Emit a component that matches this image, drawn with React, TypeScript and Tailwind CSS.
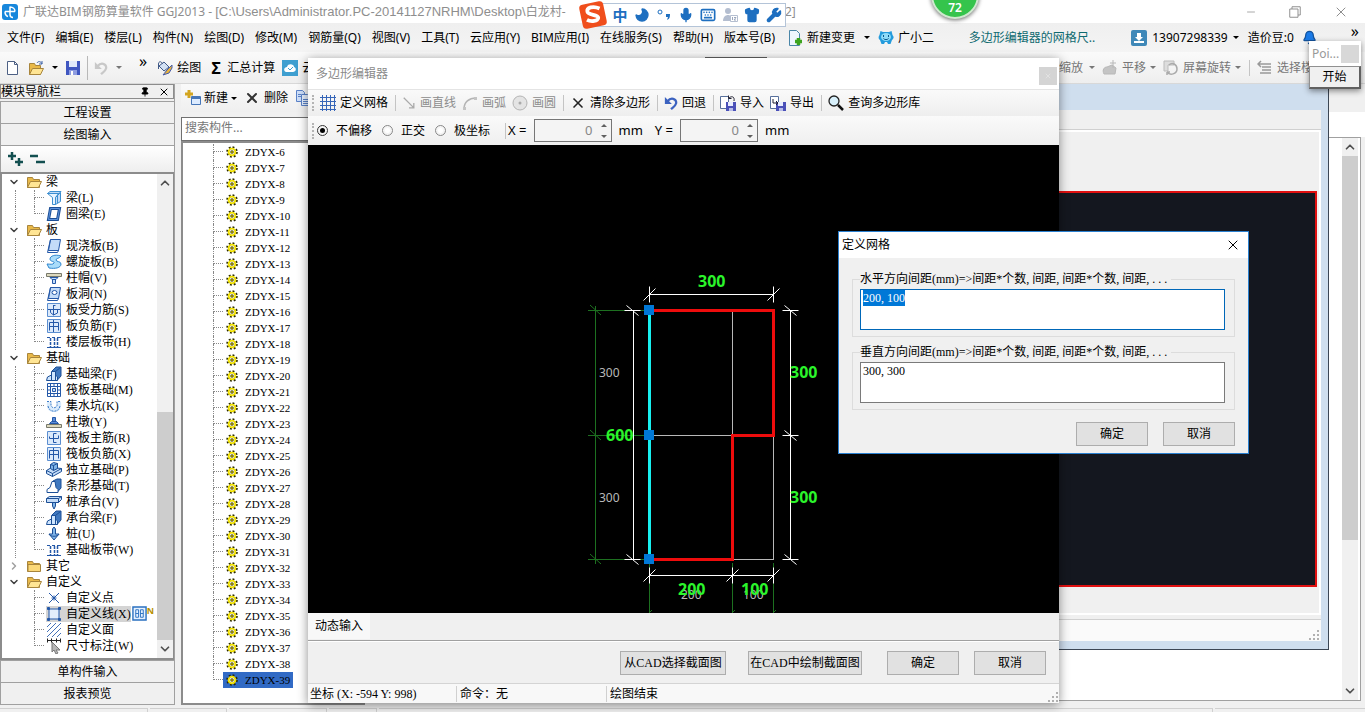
import { useEffect, useRef, useState } from 'react';
import type { ReactNode } from 'react';
import clsx from 'clsx';
import { Bell, ChevronDown, ChevronRight, ChevronUp, Keyboard, Mic, Minus, Moon, Pin, Shirt, Wrench, X } from 'lucide-react';

const ui = "font-['Noto_Sans','Noto_Sans_CJK_SC',sans-serif]";
const song = "font-['Liberation_Serif','Noto_Sans_CJK_SC',serif]";

const menus = [
  '文件(F)', '编辑(E)', '楼层(L)', '构件(N)', '绘图(D)', '修改(M)', '钢筋量(Q)', '视图(V)',
  '工具(T)', '云应用(Y)', 'BIM应用(I)', '在线服务(S)', '帮助(H)', '版本号(B)',
];

const tree = [
  { name: '梁', open: true, items: [['beam', '梁(L)'], ['ring', '圈梁(E)']] },
  {
    name: '板',
    open: true,
    items: [
      ['slab', '现浇板(B)'], ['spiral', '螺旋板(B)'], ['cap', '柱帽(V)'], ['hole', '板洞(N)'],
      ['rebar', '板受力筋(S)'], ['negative', '板负筋(F)'], ['strip', '楼层板带(H)'],
    ],
  },
  {
    name: '基础',
    open: true,
    items: [
      ['found', '基础梁(F)'], ['raft', '筏板基础(M)'], ['pit', '集水坑(K)'], ['pier', '柱墩(Y)'],
      ['mainbar', '筏板主筋(R)'], ['negative', '筏板负筋(X)'], ['single', '独立基础(P)'], ['band', '条形基础(T)'],
      ['pilecap', '桩承台(V)'], ['found', '承台梁(F)'], ['pile', '桩(U)'], ['strip', '基础板带(W)'],
    ],
  },
  { name: '其它', open: false, items: [] },
  {
    name: '自定义',
    open: true,
    items: [['point', '自定义点'], ['line', '自定义线(X)'], ['area', '自定义面'], ['measure', '尺寸标注(W)']],
  },
];

const components = Array.from({ length: 34 }, (_, i) => `ZDYX-${i + 6}`);

function Svg({ children, className = 'size-4' }: { children: ReactNode; className?: string }) {
  return (
    <svg viewBox="0 0 16 16" className={clsx('shrink-0', className)} fill="none" aria-hidden="true">
      {children}
    </svg>
  );
}

const B = '#2458a8';
const L = '#c4dcf8';

const treeIcons: Record<string, ReactNode> = {
  beam: (
    <g stroke="#3d8fd0" fill={L}>
      <path d="M1.500 3.500 4 1.500h11l-2 2z" />
      <path d="M1.500 3.500h11l-3 4v7h-3v-7z" fill="#e8f4ff" />
      <path d="m9.500 7.500 5-5v9l-5 3zM11.500 6v7" />
    </g>
  ),
  ring: (
    <>
      <path d="M4.500 2.500h9l-2 11h-9z" stroke="#1c4f96" strokeWidth="3" fill="#fff" />
      <path d="M4.500 2.500h9l-2 11h-9z" stroke="#5d92dc" />
    </>
  ),
  slab: (
    <g stroke={B}>
      <path d="M4.500 1.500h10l-2 11h-10z" fill={L} />
      <path d="M4.500 1.500 1.500 14.500h10l1-2M2.500 12.500h10" />
    </g>
  ),
  spiral: <path d="M15 2C9 0 4 2 4 5c0 3 5 2 4 4-1 2-4 1-7 1l2 4c6 1 12 0 12-4 0-3-5-2-5-4 0-2 3-1 5-4z" fill="#a9dcfa" stroke="#2f86cf" />,
  cap: (
    <>
      <path d="M.5 3.500h15v3H.5z" fill="#dcd8bd" stroke="#77786b" />
      <path d="m4 7.500 2 2h4l2-2zM6.500 9.500h3v4h-3z" fill={L} stroke={B} />
    </>
  ),
  hole: (
    <g stroke={B}>
      <path d="M4.500 1.500h10l-2 11h-10z" fill={L} />
      <path d="M4.500 1.500 1.500 14.500h10l1-2M2.500 12.500h10" />
      <ellipse cx="8.500" cy="6.500" rx="2.500" ry="2" fill="#fff" />
    </g>
  ),
  rebar: (
    <g stroke={B}>
      <path d="M1.500 1.500h13v13h-13z" fill="#dceafb" stroke="#5b8ed0" />
      <path d="M2 7.500h12M7.500 3v10M9.500 3.500h-2M4.500 8v2.500l3 2.500 4-2V8" />
    </g>
  ),
  mainbar: (
    <g stroke={B}>
      <path d="M1.500 1.500h13v13h-13z" fill="#dceafb" stroke="#5b8ed0" />
      <path d="M3.500 6.500v2h9v-3M10.500 3.500h-3v9h3" />
    </g>
  ),
  negative: (
    <g stroke={B}>
      <path d="M1.500 1.500h13v13h-13z" fill="#dceafb" stroke="#5b8ed0" />
      <path d="M3.500 12.500v-8h9v8M3.500 8.500h9M7.500 2v12" />
    </g>
  ),
  strip: (
    <g stroke={B}>
      <path d="M1 13.500h14M1 3.500h3M6 3.500h3M11 3.500h4" />
      <path d="M4.500 4v9M8.500 4v9M11.500 4v9" strokeWidth="1.500" strokeDasharray="3 1" />
    </g>
  ),
  found: (
    <g stroke="#1c4f96">
      <path d="m6 5 4-4h5v9l-4 4.500z" fill="#3f78bf" />
      <path d="M.500 14.500 1.500 11l4-2V5.500h4V9l2 2v3.500z" fill="#cfe6ff" />
      <path d="M5.500 9v5M9.500 9v5M9.500 5.500l5-4" />
    </g>
  ),
  raft: (
    <g stroke={B}>
      <path d="M1.500 1.500h13v13h-13z" fill="#fff" />
      <path d="M1 4.500h14M1 11.500h14M4.500 1v14M11.500 1v14" />
      <path d="M6.500 6.500h3v3h-3z" fill={L} />
      <path d="M1 8h3M12 8h3M8 1v3M8 12v3" />
    </g>
  ),
  pit: (
    <>
      <path d="M1 4h4v4c1 2 5 2 6 0V4h4c1 7-2 10-7 10S0 11 1 4z" fill="#d9ebfc" />
      <path d="M1 3.500h4v4c1 3 5 3 6 0v-4h4M2 8c1 7 11 7 12 0" stroke="#3d7cc8" strokeDasharray="2 1" />
    </>
  ),
  pier: (
    <>
      <path d="M.5 10.500h15v3H.5z" fill="#dcd8bd" stroke="#77786b" />
      <path d="m3.500 9.500 2-2h5l2 2zM6.500 3.500h3v4h-3z" fill="#5c8cd8" stroke={B} />
    </>
  ),
  single: (
    <g stroke="#1c4f96">
      <path d="m.500 8.500 5-3 10 1v3l-9 5-6-3z" fill={L} />
      <path d="m.500 8.500 6 3 9-5M6.500 11.500v3" />
      <path d="m4.500 2.500 3-2 4 1v5l-4 2-3-2z" fill="#7fb4e8" />
      <path d="m4.500 2.500 3 1 4-2M7.500 3.500v5" />
    </g>
  ),
  band: (
    <g stroke="#1c4f96">
      <path d="m7 3 4-2h4v9l-4 4.500z" fill="#3f78bf" />
      <path d="M1 14.500v-3l3-2 2-6h3l1 6 2 2v3z" fill="#fff" />
    </g>
  ),
  pilecap: (
    <g stroke="#1c4f96">
      <path d="m.500 4.500 3-2h12v3l-3 3H.500z" fill={L} />
      <path d="M.500 4.500h12l3-2M12.500 4.500v4" />
      <path d="M6.500 8.500h3V12L8 15l-1.500-3z" fill="#7fb4e8" />
    </g>
  ),
  pile: <path d="M8 1 6.500 3v5H3l5 6 5-6H9.500V3zM3 8c1 3 9 3 10 0" fill="#7fb4e8" stroke="#1c4f96" />,
  point: <path d="m3 3 10 10M13 3 3 13M5.500 8h5M8 5.500v5" stroke={B} />,
  line: (
    <g stroke={B}>
      <path d="M3 3h10v10H3z" fill="#e4eefb" />
      <path d="M1.500 1.500h2v2h-2zM12.500 1.500h2v2h-2zM1.500 12.500h2v2h-2zM12.500 12.500h2v2h-2z" fill={B} />
    </g>
  ),
  area: <path d="m1 5 4-4M1 10l9-9M1 15 15 1M6 15l9-9M11 15l4-4" stroke="#4472b8" />,
  measure: (
    <>
      <path d="M1.500.500v4M14.500.500v4M1 2.500h14M5.500.500v4M10.500.500v4" stroke="#222" />
      <path d="m6 4 8 8h-4l2 3-2 1-2-4-2 2z" fill="#b8b8b8" stroke="#777" />
    </>
  ),
};

function Folder({ open }: { open?: boolean }) {
  return (
    <Svg>
      <path d="M1.500 13.500v-10h5l1 2h6v8z" fill="#e9b949" stroke="#a8853c" />
      {open ? (
        <path d="m1.500 13.500 3-6h11l-3 6z" fill="#ffe594" stroke="#a8853c" />
      ) : (
        <path d="M2 6.500h12.500v7H2z" fill="#fbd878" stroke="#a8853c" />
      )}
    </Svg>
  );
}

function Gear() {
  return (
    <Svg className="size-3">
      <circle cx="8" cy="8" r="6.500" stroke="#2b2a00" strokeWidth="2.500" strokeDasharray="2.500 2.600" />
      <circle cx="8" cy="8" r="4.500" fill="#fff" stroke="#f0e000" strokeWidth="2.500" />
      <path d="M6.500 6.500h3v3h-3z" fill="#f0e000" stroke="#2b2a00" />
    </Svg>
  );
}

function Arrow({ className = 'border-t-black' }: { className?: string }) {
  return <span className={clsx('border-x-3 border-t-3 border-x-transparent', className)} />;
}

function Sep() {
  return <span className="ml-px h-4 w-px bg-[#c4c4c4]" />;
}

function Grip() {
  return <span className="h-4 border-l-2 border-dotted border-[#b4b4b4]" />;
}

function Dots() {
  return (
    <svg viewBox="0 0 10 10" className="size-[10px] fill-[#b0b0b0]" aria-hidden="true">
      <path d="M8 0h2v2H8zM8 4h2v2H8zM4 4h2v2H4zM8 8h2v2H8zM4 8h2v2H4zM0 8h2v2H0z" />
    </svg>
  );
}

function Tool({ icon, label, disabled }: { icon: ReactNode; label: string; disabled?: boolean }) {
  return (
    <button disabled={disabled} className="flex items-center gap-1 whitespace-nowrap disabled:text-[#8c8c8c]">
      {icon}
      {label}
    </button>
  );
}

function PushButton({ children, className = 'w-[72px]' }: { children: ReactNode; className?: string }) {
  return (
    <button className={clsx('h-6 border border-[#adadad] bg-[#e1e1e1] hover:border-[#0078d7]', className)}>{children}</button>
  );
}

function TitleBar() {
  return (
    <header className="flex h-[23px] items-center bg-white pl-[2px] text-xs text-[#8e8e8e]">
      <Svg className="mr-[5px] size-4">
        <rect width="16" height="16" rx="3" fill="#1787dc" />
        <path d="M8 2.500v8c0 2 1.500 3 3 3M3 7.500h10M8 3c3 0 5 2 5 4.500M3 7.500C3 10 4.500 12 6 12.500" stroke="#fff" strokeWidth="1.500" />
      </Svg>
      <h1 className="w-[762px] overflow-hidden whitespace-nowrap">
        广联达BIM钢筋算量软件 GGJ2013 -{' '}
        <span className="font-['Liberation_Sans',sans-serif] text-[13px]">[C:\Users\Administrator.PC-20141127NRHM\Desktop\</span>
        白龙村-
      </h1>
      <span>2]</span>
      <div className="ml-auto flex items-center gap-8 pr-4">
        <button aria-label="最小化"><Minus className="size-3" strokeWidth={1.5} /></button>
        <button aria-label="还原">
          <Svg className="size-3"><path d="M1 4h11v11H1zM4 4V1h11v11h-3" stroke="#8e8e8e" strokeWidth="1.300" /></Svg>
        </button>
        <button aria-label="关闭"><X className="size-4" strokeWidth={1.5} /></button>
      </div>
    </header>
  );
}

function MenuBar() {
  return (
    <nav className="flex h-[29px] items-center bg-gradient-to-b from-[#efefef] to-[#f4f4f4] pl-[7px] text-xs whitespace-nowrap">
      <div className="flex gap-[11px]">
        {menus.map((m) => (
          <button key={m}>{m}</button>
        ))}
      </div>
      <button className="ml-3 flex items-center gap-1">
        <Svg>
          <path d="M2.500.5h7l3 3v12h-10z" fill="#eef7ff" stroke="#4a86a8" />
          <path d="M11.500 8v7M8 11.500h7" stroke="#3da420" strokeWidth="3.500" />
        </Svg>
        新建变更
        <span className="w-px" />
        <Arrow />
      </button>
      <button className="ml-2 flex items-center gap-1">
        <Svg>
          <path d="M2.500 1 5 2h6l2.500-1 1 4c2 2 1 4-.500 5l-1.500 4H10l-1-2H7l-1 2H3.500L2 10C.500 9 0 7 1.500 5z" fill="#249bdc" />
          <ellipse cx="8" cy="7" rx="5" ry="4" fill="#8fdbf8" />
          <path d="M5.500 5v2M10.500 5v2M5.500 8.500c1 1.500 4 1.500 5 0" stroke="#07578a" />
        </Svg>
        广小二
      </button>
      <div className="ml-auto flex h-full items-center pr-[6px]">
        <a href="#grid-size" className="mr-9 text-[#0e6a70]">多边形编辑器的网格尺..</a>
        <button className="flex items-center gap-[5px]">
          <Svg>
            <rect width="16" height="16" rx="2" fill="#3f88b8" />
            <path d="M6 3h4v4h2l-4 4-4-4h2zM3 11h10v2H3z" fill="#fff" />
          </Svg>
          13907298339
          <Arrow />
        </button>
        <span className="ml-[9px]">造价豆:0</span>
        <Bell className="ml-2 size-[15px] fill-[#1b7be8] text-[#14539c]" />
        <button className="ml-[34px] self-start text-base leading-4" aria-label="更多">»</button>
      </div>
    </nav>
  );
}

function Undo({ color }: { color: string }) {
  return (
    <Svg className="size-[14px]">
      <path d="M4 6c4-5 10-3 10 2-1 4-4 5-6 7" stroke={color} strokeWidth="2.500" />
      <path d="M1 1v8h8z" fill={color} />
    </Svg>
  );
}

function MainToolbar() {
  return (
    <div className="flex h-8 items-center border-b border-[#d8d8d8] bg-gradient-to-b from-[#fafafa] to-[#eeeeee] pl-[5px] text-xs whitespace-nowrap">
      <button aria-label="新建工程">
        <Svg><path d="M2.500 1.500h7l3 3v10h-10z" fill="#fff" stroke="#4d6084" /><path d="M9.500 1.500v3h3" stroke="#4d6084" /></Svg>
      </button>
      <button aria-label="打开" className="ml-[7px] flex items-center gap-2">
        <Svg>
          <path d="M1.500 14.500v-11h5l1 2h5v9z" fill="#e9b949" stroke="#a8853c" />
          <path d="m1.500 14.500 3-6h11l-3 6z" fill="#ffe594" stroke="#a8853c" />
          <path d="M9 3c1-2 4-2 5 1M14 1v3h-3" stroke="#3f64a8" />
        </Svg>
        <Arrow />
      </button>
      <button aria-label="保存" className="ml-[7px]">
        <Svg>
          <path d="M1 1h14v14H1z" fill="#3f56c0" />
          <path d="M4 1h8v6H4z" fill="#dfe8fa" />
          <path d="M4 10h8v5H4z" fill="#8f9de0" />
          <path d="M6 11h2v4H6z" fill="#fff" />
        </Svg>
      </button>
      <span className="mx-[6px] h-6 w-px bg-[#b8b8b8]" />
      <button aria-label="撤销" disabled className="flex items-center gap-2"><Undo color="#c8c8c8" /><Arrow className="border-t-[#777]" /></button>
      <button aria-label="更多" className="mr-[10px] ml-[17px] self-start pt-px text-base leading-4">»</button>
      <Tool
        label="绘图"
        icon={
          <Svg>
            <path d="m2 6 5-4 5 5-5 4z" fill="#d4e2f5" stroke="#405a88" />
            <path d="M1.500 9V4c0-3 3-3 4 0" stroke="#405a88" />
            <path d="m15 5-5 5-4 5 6-2 3-5z" fill="#e8b33c" stroke="#475ca8" />
          </Svg>
        }
      />
      <span className="w-2" />
      <Tool label="汇总计算" icon={<span className="w-[14px] text-base font-bold leading-4">Σ</span>} />
      <span className="w-[7px]" />
      <Tool
        label="云"
        icon={
          <Svg>
            <rect width="16" height="16" fill="#3f9fd0" />
            <path d="M4 12c-3-1-2-5 1-5 1-4 7-3 7 0 3 1 2 5-1 5z" fill="#fff" />
            <path d="m6 8 2 2 3-3" stroke="#3f9fd0" />
          </Svg>
        }
      />
      <select aria-label="楼层" className="ml-[391px] h-[22px] w-[62px] appearance-none border border-[#606060] bg-white" />
      <div className="ml-auto flex items-center gap-[7px] pr-[40px] text-[#777]">
        <button disabled className="flex items-center gap-[6px]">缩放<Arrow className="border-t-[#777]" /></button>
        <button disabled className="flex items-center gap-1">
          <Svg><path d="M2 14c-2-4 0-7 3-7l5-2 4 3-1 6zM11 0v8M8 3h6" fill="#c4c4c4" stroke="#b8b8b8" /></Svg>
          平移
          <Arrow className="border-t-[#777]" />
        </button>
        <button disabled className="flex items-center gap-1">
          <Svg><path d="M1 1h10v4H5v6H1z" fill="#ddd" stroke="#bbb" /><path d="M4 12c3 4 10 2 10-3S9 2 6 5M4 12v3M4 12h3" stroke="#aaa" strokeWidth="1.500" /></Svg>
          屏幕旋转
          <Arrow className="border-t-[#777]" />
        </button>
        <Sep />
        <button disabled className="flex items-center gap-1">
          <Svg><path d="M1 4h13M4 1 1 4l3 3M5 7h9M5 10h9M3 13h11" stroke="#999" strokeWidth="1.500" /></Svg>
          选择楼层
        </button>
      </div>
    </div>
  );
}

function Scrollbar({ thumb }: { thumb: string }) {
  return (
    <div className="flex w-4 shrink-0 flex-col bg-[#f0f0f0] text-[#505050]">
      <ChevronUp className="my-[2px] size-[14px] self-center" strokeWidth={3} />
      <div className="relative flex-1">
        <div className={clsx('absolute inset-x-0 bg-[#cdcdcd]', thumb)} />
      </div>
      <ChevronDown className="my-[2px] size-[14px] self-center" strokeWidth={3} />
    </div>
  );
}

function Branch({ last }: { last: boolean }) {
  return (
    <span className="flex h-4 w-3 flex-col">
      <span className="h-2 w-[10px] border-b border-l border-dotted border-[#888]" />
      <span className={clsx('h-2 border-dotted border-[#888]', !last && 'border-l')} />
    </span>
  );
}

function NavButton({ children }: { children: string }) {
  return <button className="h-[22px] shrink-0 border-t border-[#a0a0a0] bg-[#f0f0f0]">{children}</button>;
}

function Sidebar() {
  const [selected, setSelected] = useState('自定义线(X)');
  return (
    <aside className="flex w-[175px] shrink-0 flex-col border-r border-[#a0a0a0] text-xs">
      <div className="flex h-[15px] shrink-0 items-center border border-[#8c8c8c] bg-[#f0f0f0]">
        <h2 className="leading-3">模块导航栏</h2>
        <button aria-label="固定" className="ml-auto"><Pin className="size-[10px] fill-black" /></button>
        <button aria-label="关闭" className="mx-[3px] ml-2"><X className="size-3" strokeWidth={2} /></button>
      </div>
      <div className="mt-[2px] flex flex-col border-b border-l border-[#a0a0a0]">
        <NavButton>工程设置</NavButton>
        <NavButton>绘图输入</NavButton>
      </div>
      <div className="flex h-[26px] shrink-0 items-center gap-[6px] border-l border-[#a0a0a0] bg-gradient-to-b from-white to-[#eeeeee] pl-[6px]">
        <button aria-label="全部展开">
          <Svg><path d="M1 5h8M5 1v8M8 11h8M12 7v8" stroke="#134f50" strokeWidth="2.500" /></Svg>
        </button>
        <button aria-label="全部折叠">
          <Svg><path d="M1 5h8M7 11h9" stroke="#134f50" strokeWidth="2.500" /></Svg>
        </button>
      </div>
      <div className="flex min-h-0 flex-1 border-2 border-r border-[#8c8c8c] bg-white">
        <ul className={clsx('min-w-0 flex-1 overflow-hidden', song)}>
          {tree.map((group, g) => (
            <li key={group.name}>
              <div className="flex h-4 items-center">
                <span className="ml-[6px] mr-1 w-[14px] text-[#404040]">
                  {group.open ? <ChevronDown className="size-3" strokeWidth={3} /> : <ChevronRight className="size-3 text-[#a0a0a0]" strokeWidth={3} />}
                </span>
                <Folder open={group.open} />
                <span className="ml-1 leading-4">{group.name}</span>
              </div>
              <ul>
                {group.items.map(([icon, label], i) => (
                  <li key={label} className="flex h-4 pl-[13px]">
                    <span className={clsx('w-[19px] border-dotted border-[#888]', g < tree.length - 1 && 'border-l')} />
                    <Branch last={i === group.items.length - 1} />
                    <button
                      onClick={() => setSelected(label)}
                      className={clsx('flex items-center gap-1 whitespace-nowrap leading-4', selected === label && 'bg-[#d4d4d4]')}
                    >
                      <Svg>{treeIcons[icon]}</Svg>
                      {label}
                    </button>
                    {icon === 'line' && (
                      <>
                        <Svg className="ml-px size-[15px]">
                          <path d="M1 1h14v14H1z" fill="#e5f1ff" stroke="#2a70c0" strokeWidth="1.500" />
                          <path d="M4 4h3v8H4zM9 4h3v8H9zM4 8h3M9 8h3" stroke="#2a70c0" />
                        </Svg>
                        <b className="font-sans text-[9px] leading-[10px] text-[#b89000]">N</b>
                      </>
                    )}
                  </li>
                ))}
              </ul>
            </li>
          ))}
        </ul>
        <Scrollbar thumb="top-[49%] bottom-0" />
      </div>
      <div className="flex flex-col border-b border-l border-[#a0a0a0]">
        <NavButton>单构件输入</NavButton>
        <NavButton>报表预览</NavButton>
      </div>
    </aside>
  );
}

function ComponentList() {
  const [selected, setSelected] = useState('ZDYX-39');
  return (
    <section className="ml-[6px] flex w-[184px] shrink-0 flex-col text-xs">
      <div className="flex h-7 shrink-0 items-center gap-[7px] bg-gradient-to-b from-[#fafafa] to-[#efefef] pl-1">
        <button className="flex items-center gap-[3px]">
          <Svg>
            <path d="M6.500 6.500h9v8h-9z" fill="#dcebff" stroke="#4676b8" />
            <path d="M6 7h9v2H6z" fill="#4676b8" />
            <path d="M4 0v8M0 4h8" stroke="#d3a520" strokeWidth="3" />
          </Svg>
          新建
          <Arrow />
        </button>
        <Tool label="删除" icon={<X className="size-4 text-[#333]" strokeWidth={3} />} />
        <Svg>
          <path d="M1.500.5h6l2 2v9h-8z" fill="#cfe0fa" stroke="#5a82c8" />
          <path d="M6.500 4.500h6l3 3v8h-9z" fill="#e6f0ff" stroke="#5a82c8" />
          <path d="M8 9.500h6M8 11.500h6M8 13.500h6M3 4.500h3M3 6.500h3" stroke="#5a82c8" />
        </Svg>
      </div>
      <input
        aria-label="搜索构件"
        placeholder="搜索构件..."
        className="mt-[5px] h-6 shrink-0 border border-[#707070] bg-white pb-[3px] pl-[3px] text-xs placeholder:text-[#777]"
      />
      <ul className="min-h-0 flex-1 border-2 border-[#8c8c8c] bg-white pt-px font-['Liberation_Serif',serif] text-[11px]">
        {components.map((name, i) => (
          <li key={name} className="flex h-4 pl-[30px]">
            <Branch last={i === components.length - 1} />
            <button
              onClick={() => setSelected(name)}
              className={clsx('-ml-[2px] flex items-center gap-[7px] px-[3px] leading-4', selected === name && 'bg-[#316ac5]')}
            >
              <Gear />
              {name}
            </button>
          </li>
        ))}
      </ul>
    </section>
  );
}

function Workspace() {
  return (
    <main className="flex min-w-0 flex-1 bg-[#f0f0f0]">
      <div className="mb-1 flex min-w-0 flex-1 flex-col border-b border-[#a0a0a0] bg-white">
        <div className="mb-[50px] flex min-h-0 flex-1 flex-col border-r border-b border-[#3c4654] bg-[#cfdeee] px-[7px] pt-[26px] pb-2">
          <div className="flex min-h-0 flex-1 flex-col bg-[#f0f0f0]">
            <div className="h-5 border-b border-[#d0d0d0]" />
            <div className="flex min-h-0 flex-1 flex-col border-2 border-white pr-[2px] pb-[26px]">
              <div className="h-[59px]" />
              <div className="flex-1 border-2 border-[#e01010] bg-[#14171f]" />
            </div>
            <div className="mt-1 flex h-[22px] items-end justify-end border-t border-[#d0d0d0] bg-[#fafafa] p-px pr-[2px]">
              <Dots />
            </div>
          </div>
        </div>
      </div>
      <div className="mb-1 flex w-9 flex-col">
        <div className="h-7" />
        <div className="h-[25px] bg-white" />
        <div className="mr-1 flex min-h-0 flex-1 border-t border-r border-b border-[#a0a0a0] bg-white pr-[2px]">
          <span className="flex-1" />
          <Scrollbar thumb="top-0 h-[73%]" />
        </div>
      </div>
    </main>
  );
}

// slanted tick at the end of a dimension line
function Tick({ x, y, vertical }: { x: number; y: number; vertical?: boolean }) {
  return (
    <path
      stroke="#fff"
      d={vertical ? `M${x - 8} ${y}h16M${x - 6} ${y - 5}l12 10` : `M${x} ${y - 8}v16M${x - 6} ${y + 6}l12-12`}
    />
  );
}

function Drawing() {
  return (
    <svg viewBox="308 145 751 468" className="min-h-0 w-full flex-1 bg-black" fill="none" role="img" aria-label="截面图">
      <g stroke="#1d7020">
        <path d="M588 310.500h61M588 435.500h61M588 559.500h61M595.500 306v258" />
        <path d="m590 305 11 10M590 430l11 10M590 554l11 10" />
        <path d="M649.500 563v50M732.500 563v50M773.500 563v50" />
        <path d="m649 613 3-3M732 613l3-3M773 613l3-3" />
      </g>
      <path stroke="#b8b8b8" d="M732.500 310v250M649 435.500h125M649 559.500h125M773.500 435v125" />
      <path stroke="#fff" d="M649 294.500h125M633.500 310v250M790.500 310v250M649 575.500h125" />
      <Tick x={649.5} y={294.5} />
      <Tick x={773.5} y={294.5} />
      <Tick x={649.5} y={575.5} />
      <Tick x={732.5} y={575.5} />
      <Tick x={773.5} y={575.5} />
      <Tick x={632.5} y={310.5} vertical />
      <Tick x={632.5} y={559.5} vertical />
      <Tick x={790.5} y={310.5} vertical />
      <Tick x={790.5} y={435.5} vertical />
      <Tick x={790.5} y={559.5} vertical />
      <path stroke="#ee0c0c" strokeWidth="3" d="M649 310.500h124.500v125h-41v124H649" />
      <path stroke="#18f0f0" strokeWidth="3" d="M649.500 310v250" />
      <path fill="#0078d7" d="M644 305h10v10h-10zM644 430h10v10h-10zM644 554h10v10h-10z" />
      <g fill="#b8b8b8" fontSize="12">
        <text x="599" y="377">300</text>
        <text x="599" y="502">300</text>
        <text x="681" y="599">200</text>
        <text x="743" y="599">100</text>
      </g>
      <g fill="#2bf52b" fontSize="16" fontWeight="700">
        <text x="698" y="287">300</text>
        <text x="790" y="378">300</text>
        <text x="790" y="503">300</text>
        <text x="606" y="441">600</text>
        <text x="678" y="595">200</text>
        <text x="741" y="595">100</text>
      </g>
    </svg>
  );
}

function Spinner({ label }: { label: string }) {
  const [value, setValue] = useState(0);
  return (
    <div className="flex items-center gap-[7px]">
      <label htmlFor={`offset-${label}`}>{label} =</label>
      <div className="flex h-[23px] w-[78px] items-center border border-[#767676] bg-[#f4f4f4] pr-1">
        <input
          id={`offset-${label}`}
          value={value}
          onChange={(e) => setValue(Number(e.target.value) || 0)}
          className="w-0 flex-1 pr-2 text-right text-[#888] outline-none"
        />
        <div className="flex flex-col gap-2">
          <button aria-label={`${label} 增加`} onClick={() => setValue(value + 1)} className="border-x-3 border-b-3 border-x-transparent border-b-[#606060]" />
          <button aria-label={`${label} 减少`} onClick={() => setValue(value - 1)} className="border-x-3 border-t-3 border-x-transparent border-t-[#606060]" />
        </div>
      </div>
      mm
    </div>
  );
}

function DiskIcon({ out }: { out?: boolean }) {
  return (
    <Svg>
      <path d="M.5 1.500h8v12h-8z" fill="#fff" stroke="#58709c" />
      <path d="M6 7h10v9H6z" fill="#4a50b8" />
      <path d="M8 7h5v4H8z" fill="#e8ecff" />
      <path d="M9 13h4v3H9z" fill="#b8bce8" />
      {out ? <path d="M3 4v4h5M6 6l2 2-2 2" stroke="#223" /> : <path d="M14 6c1-5-3-5-5-3M8.500.5v3h3" stroke="#223" />}
    </Svg>
  );
}

function PolygonEditor() {
  const [mode, setMode] = useState('不偏移');
  return (
    <div role="dialog" aria-label="多边形编辑器" className="absolute top-[58px] left-[308px] flex h-[645px] w-[751px] flex-col bg-[#f0f0f0] text-xs shadow-[0_2px_10px_rgba(0,0,0,0.45)]">
      <div className="flex h-[31px] shrink-0 items-center justify-between bg-white pr-[2px] pl-2 text-[#8a8a8a]">
        <h2>多边形编辑器</h2>
        <button aria-label="关闭" className="mt-1 flex size-[18px] items-center justify-center bg-[#d4d4d4] text-[#e8e8e8]"><X className="size-2" /></button>
      </div>
      <div className="flex h-[27px] shrink-0 items-center gap-[6px] border-t border-[#e4e4e4] bg-gradient-to-b from-[#fafafa] to-[#eeeeee] pl-1">
        <Grip />
        <Tool
          label="定义网格"
          icon={<Svg><path d="M0 2.500h16M0 6.500h16M0 10.500h16M0 14.500h16M2.500 0v16M6.500 0v16M10.500 0v16M14.500 0v16" stroke="#3565b8" /></Svg>}
        />
        <Sep />
        <Tool disabled label="画直线" icon={<Svg className="size-[14px]"><path d="m2 2 11 11M13.500 8v5.500H8" stroke="#aaa" strokeWidth="1.500" /></Svg>} />
        <Tool disabled label="画弧" icon={<Svg><path d="M2 14C2 7 7 3 14 3" stroke="#b4b4b4" strokeWidth="1.500" /><path d="M1 12h3v3H1zM12 2h3v3h-3z" fill="#c4c4c4" /></Svg>} />
        <Tool disabled label="画圆" icon={<Svg><circle cx="8" cy="8" r="7" stroke="#b4b4b4" fill="#e4e4e4" /><circle cx="8" cy="8" r="1.500" fill="#aaa" /></Svg>} />
        <Sep />
        <Tool label="清除多边形" icon={<X className="size-4 text-[#222]" strokeWidth={2.5} />} />
        <Sep />
        <Tool label="回退" icon={<Undo color="#3b62c0" />} />
        <Sep />
        <Tool label="导入" icon={<DiskIcon />} />
        <Tool label="导出" icon={<DiskIcon out />} />
        <Sep />
        <Tool
          label="查询多边形库"
          icon={<Svg><circle cx="6" cy="6" r="5" fill="#d8f0fb" stroke="#222" strokeWidth="1.300" /><path d="m10 10 5 5" stroke="#111" strokeWidth="2.500" /></Svg>}
        />
      </div>
      <div className="flex h-[29px] shrink-0 items-center bg-gradient-to-b from-[#fafafa] to-[#efefef] pl-1">
        <Grip />
        <div className="ml-[3px] flex gap-[10px]">
          {['不偏移', '正交', '极坐标'].map((m) => (
            <label key={m} className="flex items-center gap-2">
              <input
                type="radio"
                name="mode"
                checked={mode === m}
                onChange={() => setMode(m)}
                className="size-[11px] appearance-none rounded-full border border-[#888] bg-white bg-clip-content p-[2px] checked:border-[#333] checked:bg-black"
              />
              {m}
            </label>
          ))}
        </div>
        <span className="mr-[2px] ml-[14px] flex"><Sep /></span>
        <div className="flex items-center gap-3 text-[13px]">
          <Spinner label="X" />
          <Spinner label="Y" />
        </div>
      </div>
      <Drawing />
      <div className="flex h-7 shrink-0 items-start border-b border-[#a0a0a0]">
        <button className="h-[26px] bg-[#f8f8f8] px-[7px]">动态输入</button>
      </div>
      <div className={clsx('flex h-[42px] shrink-0 items-center justify-end border-t border-white pr-[13px]', song)}>
        <PushButton className="mr-[22px] w-[106px]">从CAD选择截面图</PushButton>
        <PushButton className="mr-[25px] w-[114px]">在CAD中绘制截面图</PushButton>
        <PushButton className="mr-[15px] w-[72px]">确定</PushButton>
        <PushButton>取消</PushButton>
      </div>
      <div className={clsx('flex h-5 shrink-0 items-center border-t border-[#d4d4d4] bg-[#f8f8f8] pl-[2px]', song)}>
        <span className="w-[147px] border-r border-[#d0d0d0]">坐标 (X: -594 Y: 998)</span>
        <span className="w-[150px] border-r border-[#d0d0d0] pl-[3px]">命令：无</span>
        <span className="pl-[3px]">绘图结束</span>
        <span className="ml-auto self-end p-px"><Dots /></span>
      </div>
    </div>
  );
}

function SpacingField({ id, label, initial, focus }: { id: string; label: string; initial: string; focus?: boolean }) {
  const [value, setValue] = useState(initial);
  const ref = useRef<HTMLTextAreaElement>(null);

  useEffect(() => {
    if (focus) {
      ref.current?.focus();
      ref.current?.select();
    }
  }, [focus]);

  return (
    <fieldset className="border border-[#dcdcdc] pr-[9px] pb-[6px] pl-[7px]">
      <legend className="pr-1 leading-4">
        <label htmlFor={id}>{label}</label>
      </legend>
      <textarea
        ref={ref}
        id={id}
        value={value}
        onChange={(e) => setValue(e.target.value)}
        className="mt-[2px] block h-[41px] w-full resize-none border border-[#7a7a7a] bg-white px-[2px] leading-4 outline-none selection:bg-[#0078d7] selection:text-white focus:border-[#0067b8]"
      />
    </fieldset>
  );
}

function GridDialog() {
  return (
    <div role="dialog" aria-label="定义网格" className={clsx('absolute top-[231px] left-[838px] w-[411px] border border-[#2a80d0] bg-[#f0f0f0] text-xs', song)}>
      <div className="flex h-[26px] items-center justify-between bg-white pr-[7px] pl-[3px]">
        <h2>定义网格</h2>
        <button aria-label="关闭"><X className="size-4" strokeWidth={1.5} /></button>
      </div>
      <div className="flex flex-col gap-[7px] px-[13px] pt-[13px] pb-[7px]">
        <SpacingField id="horizontal" label="水平方向间距(mm)=>间距*个数, 间距, 间距*个数, 间距, . . ." initial="200, 100" focus />
        <SpacingField id="vertical" label="垂直方向间距(mm)=>间距*个数, 间距, 间距*个数, 间距, . . ." initial="300, 300" />
        <div className="mt-[5px] flex justify-end gap-[15px]">
          <PushButton>确定</PushButton>
          <PushButton>取消</PushButton>
        </div>
      </div>
    </div>
  );
}

function InputMethodBar() {
  return (
    <div className="absolute top-[3px] left-[593px] flex h-6 w-[193px] items-center gap-[6px] border border-[#b4c4d8] bg-white pl-[18px] text-[#1e6fc0]">
      <Svg className="absolute -top-1 -left-4 size-[30px]">
        <rect x="1.500" y="1.500" width="13" height="13" rx="2" fill="#f04e1c" transform="rotate(-12 8 8)" />
        <path d="M11.500 4.500C8 3 4.500 4 5 6.200c.4 2 5.500 1.500 5.800 3.200.3 2-4 2.300-6 1.200" stroke="#fff" strokeWidth="2" />
      </Svg>
      <b className="w-4 text-center text-[15px]">中</b>
      <Moon className="size-4 -scale-x-100 fill-current" />
      <Svg><circle cx="4" cy="5" r="2" stroke="#1e6fc0" /><path d="M10 7h4c0 4-1 5-3 6l1-3h-2z" fill="#1e6fc0" /></Svg>
      <Mic className="size-4 fill-current" />
      <Keyboard className="size-4" strokeWidth={2.5} />
      <Svg><circle cx="6" cy="4" r="3" fill="#b4bed0" /><path d="M1 14c0-8 10-8 10 0z" fill="#b4bed0" /><path d="M8.500 8.500h7v6h-7z" fill="#fff" stroke="#b4bed0" /><path d="M10.500 10v3M12 10.500h2L12 13h2" stroke="#9aa6bc" /></Svg>
      <Shirt className="size-4 fill-current" />
      <Wrench className="size-4 fill-current" />
    </div>
  );
}

function PointWindow() {
  return (
    <div className="absolute top-[41px] right-1 w-[52px] bg-white text-xs shadow-[0_2px_6px_rgba(0,0,0,0.45)]">
      <div className="flex h-[25px] items-center justify-between pr-[2px] pl-[3px] text-[#999]">
        Poi...
        <button aria-label="关闭" className="size-[18px] bg-[#d8d8d8]" />
      </div>
      <button className="h-[23px] w-full border border-r-2 border-b-2 border-[#606060] border-t-[#909090] border-l-[#909090] bg-[#f0f0f0]">开始</button>
    </div>
  );
}

export default function App() {
  return (
    <div className={clsx('relative flex h-screen flex-col overflow-hidden bg-[#f0f0f0] text-black', ui)}>
      <TitleBar />
      <MenuBar />
      <MainToolbar />
      <div className="flex min-h-0 flex-1">
        <Sidebar />
        <ComponentList />
        <Workspace />
      </div>
      <footer className="flex h-[7px] shrink-0 gap-[2px] pt-[3px]">
        <span className="w-[148px] border-t border-r border-[#d0d0d0]" />
        <span className="w-[77px] border-t border-r border-[#d0d0d0]" />
        <span className="w-[98px] border-t border-r border-[#d0d0d0]" />
        <span className="w-12 border-t border-r border-[#d0d0d0]" />
        <span className="flex-1 border-t border-r border-[#d0d0d0]" />
        <span className="w-[150px] border-t border-[#d0d0d0]" />
      </footer>
      <PolygonEditor />
      <GridDialog />
      <InputMethodBar />
      <div className="absolute -top-[29px] left-[931px] flex size-12 items-end justify-center rounded-full border-2 border-[#d0e8d0] bg-[#35c44c] pb-px text-xs leading-4 font-semibold text-white shadow-[0_1px_4px_rgba(0,0,0,0.6)]">
        72
      </div>
      <PointWindow />
    </div>
  );
}
